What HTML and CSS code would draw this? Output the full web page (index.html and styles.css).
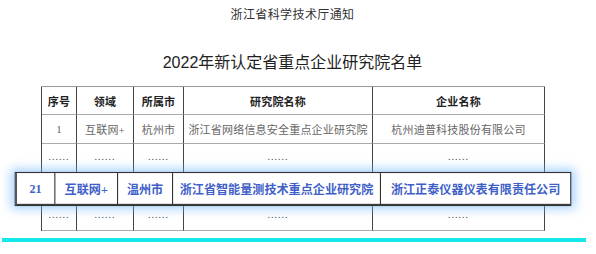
FILE: index.html
```html
<!DOCTYPE html>
<html lang="zh">
<head>
<meta charset="utf-8">
<title>2022年新认定省重点企业研究院名单</title>
<link rel="stylesheet" href="styles.css">
</head>
<body>
<div class="page">
  <div class="notice">浙江省科学技术厅通知</div>
  <h1 class="title">2022年新认定省重点企业研究院名单</h1>
  <div class="table">
    <div class="row head">
      <div class="cell">序号</div>
      <div class="cell">领域</div>
      <div class="cell">所属市</div>
      <div class="cell">研究院名称</div>
      <div class="cell">企业名称</div>
    </div>
    <div class="row">
      <div class="cell">1</div>
      <div class="cell">互联网+</div>
      <div class="cell">杭州市</div>
      <div class="cell">浙江省网络信息安全重点企业研究院</div>
      <div class="cell">杭州迪普科技股份有限公司</div>
    </div>
    <div class="row dots">
      <div class="cell">......</div>
      <div class="cell">......</div>
      <div class="cell">......</div>
      <div class="cell">......</div>
      <div class="cell">......</div>
    </div>
    <div class="row hl">
      <div class="cell">21</div>
      <div class="cell">互联网+</div>
      <div class="cell">温州市</div>
      <div class="cell">浙江省智能量测技术重点企业研究院</div>
      <div class="cell">浙江正泰仪器仪表有限责任公司</div>
    </div>
    <div class="row dots">
      <div class="cell">......</div>
      <div class="cell">......</div>
      <div class="cell">......</div>
      <div class="cell">......</div>
      <div class="cell">......</div>
    </div>
  </div>
  <div class="bar"></div>
</div>
</body>
</html>
```

FILE: styles.css
```css
html, body {
  margin: 0;
  padding: 0;
  background: #fff;
}
.page {
  width: 585px;
  font-family: "Liberation Sans", "Noto Sans CJK SC", sans-serif;
}
.notice {
  padding-top: 7px;
  font-size: 12px;
  line-height: 17px;
  letter-spacing: 0.4px;
  text-align: center;
  color: #333;
}
.title {
  margin: 28px 0 0;
  font-size: 16px;
  line-height: 22px;
  font-weight: normal;
  text-align: center;
  color: #222;
}
.table {
  margin: 12px 0 0 41px;
  width: 504px;
  border-top: 1px solid #999;
  font-family: "Liberation Serif", "Noto Sans CJK SC", serif;
}
.row {
  display: grid;
  grid-template-columns: 35px 57px 50px 189px 172px;
  border-left: 1px solid #444;
  height: 29px;
  background: #fff;
}
.row.head {
  height: 28px;
}
.cell {
  display: flex;
  align-items: center;
  justify-content: center;
  border-right: 1px solid #444;
  border-bottom: 1px solid #aaa;
  font-size: 11px;
  letter-spacing: 0.2px;
  color: #666;
  white-space: nowrap;
}
.head .cell {
  font-weight: bold;
  color: #222;
}
.dots .cell {
  color: #444;
  letter-spacing: 1px;
  font-size: 10px;
  padding-bottom: 3px;
}
.row.hl {
  position: relative;
  z-index: 1;
  transform: translateY(1.5px) scale(1.1);
  box-shadow: 0 0 0 1px #333, 0 0 9px 4px rgba(110, 180, 255, 0.6);
}
.hl .cell {
  border-right-color: #333;
  border-bottom-color: #333;
  font-weight: bold;
  letter-spacing: 0;
  color: #3f5fc8;
}
.hl .cell:last-child {
  border-right: none;
}
.bar {
  margin: 7px 0 0 2px;
  width: 584px;
  height: 4px;
  background: #14e8ea;
}
```
